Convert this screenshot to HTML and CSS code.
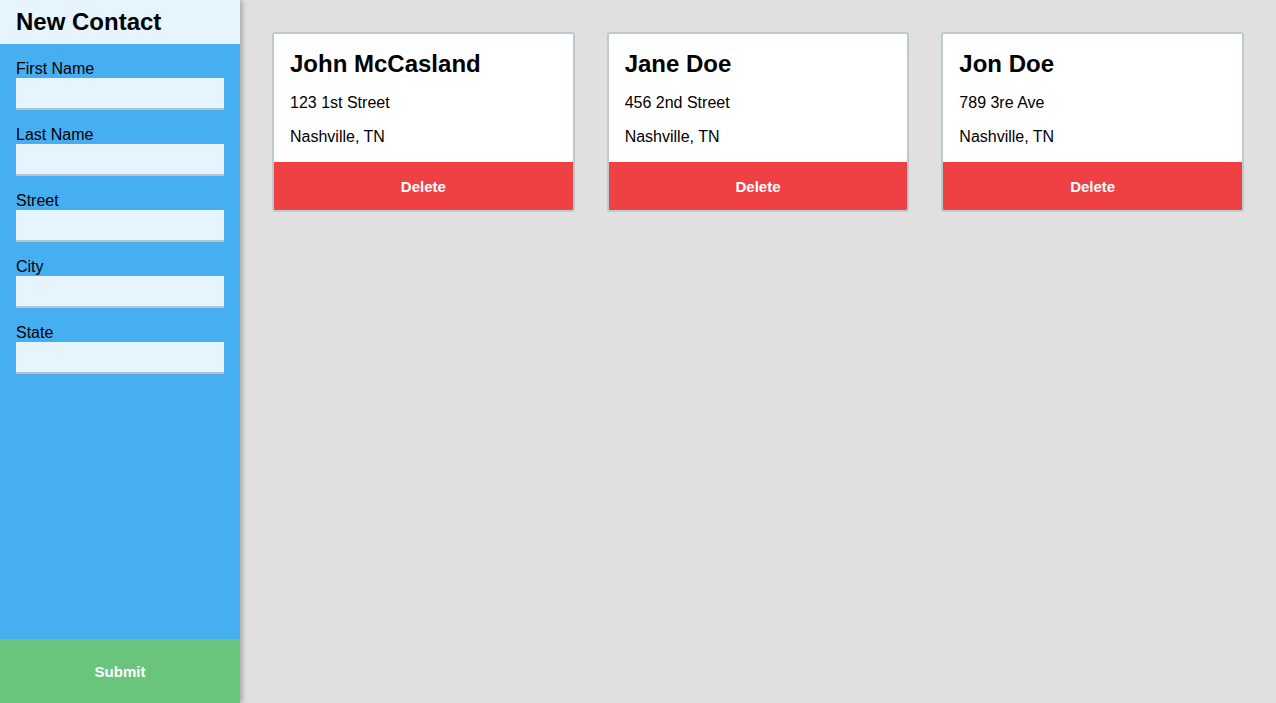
FILE: index.html
```html
<!DOCTYPE html>
<html>
<head>
<meta charset="utf-8">
<link rel="stylesheet" href="styles.css">
</head>
<body>
<div class="app">
  <aside class="sidebar">
    <h1 class="sidebar-title">New Contact</h1>
    <form class="form">
      <div class="fields">
        <label class="field"><span class="label">First Name</span><input class="input" type="text"></label>
        <label class="field"><span class="label">Last Name</span><input class="input" type="text"></label>
        <label class="field"><span class="label">Street</span><input class="input" type="text"></label>
        <label class="field"><span class="label">City</span><input class="input" type="text"></label>
        <label class="field"><span class="label">State</span><input class="input" type="text"></label>
      </div>
      <button class="submit" type="button">Submit</button>
    </form>
  </aside>
  <main class="main">
    <div class="cards">
      <div class="card">
        <div class="card-body">
          <h2 class="card-name">John McCasland</h2>
          <p class="card-line">123 1st Street</p>
          <p class="card-line">Nashville, TN</p>
        </div>
        <button class="delete" type="button">Delete</button>
      </div>
      <div class="card">
        <div class="card-body">
          <h2 class="card-name">Jane Doe</h2>
          <p class="card-line">456 2nd Street</p>
          <p class="card-line">Nashville, TN</p>
        </div>
        <button class="delete" type="button">Delete</button>
      </div>
      <div class="card">
        <div class="card-body">
          <h2 class="card-name">Jon Doe</h2>
          <p class="card-line">789 3re Ave</p>
          <p class="card-line">Nashville, TN</p>
        </div>
        <button class="delete" type="button">Delete</button>
      </div>
    </div>
  </main>
</div>
</body>
</html>
```
FILE: styles.css
```css
* { box-sizing: border-box; }
html, body { margin: 0; padding: 0; height: 100%; }
body {
  font-family: "Liberation Sans", Arial, Helvetica, sans-serif;
  font-size: 16px;
  color: #000;
  background: #e0e0e0;
}
.app {
  display: flex;
  height: 100vh;
}
.sidebar {
  width: 240px;
  flex: 0 0 240px;
  display: flex;
  flex-direction: column;
  background: #45aff2;
  box-shadow: 2px 0 5px rgba(0, 0, 0, 0.28);
  position: relative;
  z-index: 1;
}
.sidebar-title {
  margin: 0;
  height: 44px;
  padding: 0 16px;
  display: flex;
  align-items: center;
  font-size: 24px;
  font-weight: bold;
  background: #e6f4fd;
}
.form {
  flex: 1;
  display: flex;
  flex-direction: column;
  margin: 0;
}
.fields {
  flex: 1;
  padding: 16px 16px 0;
  display: flex;
  flex-direction: column;
  gap: 16px;
}
.field {
  display: flex;
  flex-direction: column;
}
.label {
  display: block;
  height: 18px;
  line-height: 18px;
  font-size: 16px;
}
.input {
  display: block;
  width: 100%;
  height: 32px;
  margin: 0;
  border: 0;
  border-bottom: 2px solid #b6c3c8;
  background: #e6f4fd;
  font: inherit;
  padding: 0 8px;
  outline: none;
}
.submit {
  height: 64px;
  width: 100%;
  border: 0;
  margin: 0;
  background: #69c47c;
  color: #fff;
  font-family: inherit;
  font-size: 15px;
  font-weight: bold;
}
.main {
  flex: 1;
  padding: 32px;
}
.cards {
  display: grid;
  grid-template-columns: repeat(3, 1fr);
  gap: 32px;
  align-items: start;
}
.card {
  background: #fff;
  border: 2px solid #bccad0;
  border-radius: 3px;
  overflow: hidden;
}
.card-body {
  padding: 16px;
}
.card-name {
  margin: 0 0 16px;
  font-size: 24px;
  line-height: 28px;
  font-weight: bold;
}
.card-line {
  margin: 16px 0 0;
  font-size: 16px;
  line-height: 18px;
}
.card-name + .card-line { margin-top: 0; }
.delete {
  display: block;
  width: 100%;
  height: 48px;
  border: 0;
  margin: 0;
  background: #ef4044;
  color: #fff;
  font-family: inherit;
  font-size: 15px;
  font-weight: bold;
}
```
